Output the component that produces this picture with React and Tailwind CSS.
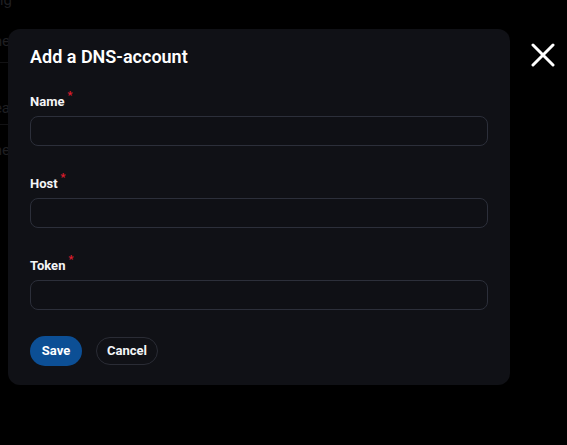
import React from "react";

const font = { fontFamily: "Roboto, 'Noto Sans', Arial, sans-serif" };

function Field({ label }) {
  return (
    <div className="flex flex-col">
      <label className="flex items-start h-[16px] text-[13px] leading-[16px] font-bold text-[#f4f5f7]">
        {label}
        <span className="ml-[3px] -mt-[4px] text-[11px] leading-[12px] text-[#e11d2e]">*</span>
      </label>
      <input className="mt-[6px] h-[30px] w-full rounded-[8px] border border-[#2c2f3a] bg-[#0f1015] outline-none" />
    </div>
  );
}

export default function App() {
  return (
    <div className="relative h-[445px] w-[567px] overflow-hidden bg-black" style={font}>
      {/* dimmed page behind */}
      <div className="flex flex-col text-[15px] leading-[20px] text-[#1f1f22]">
        <div className="-mt-[10px] h-[20px] flex justify-end w-[12px] overflow-hidden whitespace-nowrap">Config</div>
        <div className="mt-[21px] h-[20px] flex justify-end w-[10px] overflow-hidden whitespace-nowrap">Name</div>
        <div className="mt-[11px] h-px w-[10px] bg-[#121214]" />
        <div className="mt-[35px] h-[20px] flex justify-end w-[10px] overflow-hidden whitespace-nowrap">Area</div>
        <div className="mt-[6px] h-px w-[10px] bg-[#121214]" />
        <div className="mt-[15px] h-[20px] flex justify-end w-[10px] overflow-hidden whitespace-nowrap">None</div>
      </div>

      {/* modal */}
      <div className="absolute left-[8px] top-[29px] w-[502px] h-[356px] rounded-[12px] bg-[#101116] px-[22px] pt-[16px] pb-[19px] flex flex-col">
        <h2 className="h-[24px] text-[18px] leading-[24px] font-semibold text-white">Add a DNS-account</h2>
        <div className="mt-[25px] flex flex-col gap-[30px]">
          <Field label="Name" />
          <Field label="Host" />
          <Field label="Token" />
        </div>
        <div className="mt-[26px] flex items-center gap-[14px]">
          <button className="h-[30px] w-[52px] rounded-full bg-[#0c4f95] text-[13px] font-bold text-white">Save</button>
          <button className="h-[28px] w-[62px] rounded-full border border-[#2a2c35] text-[13px] font-bold text-[#f4f5f7]">Cancel</button>
        </div>
      </div>

      {/* close */}
      <svg className="absolute left-[531px] top-[43px]" width="24" height="24" viewBox="0 0 24 24">
        <path d="M2 2 L22 22 M22 2 L2 22" stroke="white" strokeWidth="3" strokeLinecap="round" />
      </svg>
    </div>
  );
}
